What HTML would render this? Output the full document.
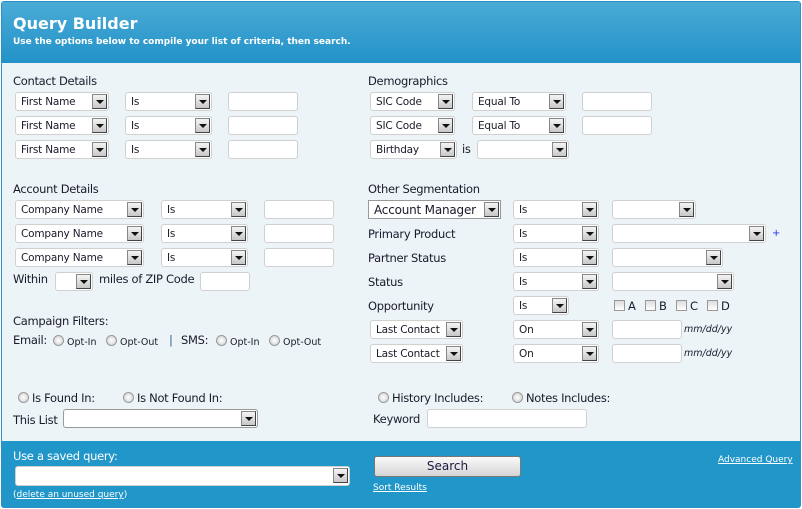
<!DOCTYPE html>
<html><head><meta charset="utf-8"><style>
*{box-sizing:border-box;margin:0;padding:0}
body{width:802px;height:509px;background:#fff;font-family:"DejaVu Sans","Liberation Sans",sans-serif;font-size:11px;color:#1a1a2a;position:relative;overflow:hidden}
#wrap{position:absolute;left:1px;top:1px;width:800px;height:507px;border:1px solid #2a8fc4;background:#edf4f8;border-radius:3px}
#hd{position:absolute;left:0;top:0;width:798px;height:61px;background:linear-gradient(#4babd6,#2292c8)}
#ft{position:absolute;left:0;top:439px;width:798px;height:66px;background:#2196c8}
.a{position:absolute;white-space:nowrap}
.s{position:absolute;height:19px;background:#fff;border:1px solid #d0d0d0;border-radius:3px;padding:3px 0 0 5px;font-size:10.5px;letter-spacing:-0.2px;white-space:nowrap}
.s i{position:absolute;right:1px;top:1px;width:15px;height:15px;background:linear-gradient(#f4f4f4,#c8c8c8);border:1px solid #888;border-right-color:#444;border-bottom-color:#444}
.s i:after{content:"";position:absolute;left:3px;top:5px;border-left:4px solid transparent;border-right:4px solid transparent;border-top:4px solid #111}
.t{position:absolute;height:19px;background:#fff;border:1px solid #d0d0d0;border-radius:3px}
.r{display:inline-block;width:11px;height:11px;border-radius:50%;border:1px solid #999;background:radial-gradient(#fff,#ccc);vertical-align:-1px;margin-right:3px}
.c{display:inline-block;width:11px;height:11px;border:1px solid #999;background:linear-gradient(#ddd,#fff);vertical-align:-1px;margin-right:3px}
.h{font-size:11.5px;letter-spacing:-0.3px;margin-top:1px}
</style></head><body>
<div id="wrap">
<div id="hd"></div><div id="ft"></div>
</div>
<div class="a" style="left:13px;top:14px;font-size:16px;font-weight:bold;color:#fff">Query Builder</div>
<div class="a" style="left:13px;top:37px;font-size:9px;font-weight:bold;color:#fff">Use the options below to compile your list of criteria, then search.</div>

<div class="a h" style="left:13px;top:73px">Contact Details</div>
<div class="s" style="left:15px;top:92px;width:94px">First Name<i></i></div>
<div class="s" style="left:125px;top:92px;width:87px">Is<i></i></div>
<div class="t" style="left:228px;top:92px;width:70px"></div>
<div class="s" style="left:15px;top:116px;width:94px">First Name<i></i></div>
<div class="s" style="left:125px;top:116px;width:87px">Is<i></i></div>
<div class="t" style="left:228px;top:116px;width:70px"></div>
<div class="s" style="left:15px;top:140px;width:94px">First Name<i></i></div>
<div class="s" style="left:125px;top:140px;width:87px">Is<i></i></div>
<div class="t" style="left:228px;top:140px;width:70px"></div>

<div class="a h" style="left:368px;top:73px">Demographics</div>
<div class="s" style="left:370px;top:92px;width:85px">SIC Code<i></i></div>
<div class="s" style="left:472px;top:92px;width:94px">Equal To<i></i></div>
<div class="t" style="left:582px;top:92px;width:70px"></div>
<div class="s" style="left:370px;top:116px;width:85px">SIC Code<i></i></div>
<div class="s" style="left:472px;top:116px;width:94px">Equal To<i></i></div>
<div class="t" style="left:582px;top:116px;width:70px"></div>
<div class="s" style="left:370px;top:140px;width:87px">Birthday<i></i></div>
<div class="a h" style="left:462px;top:141px">is</div>
<div class="s" style="left:477px;top:140px;width:92px"><i></i></div>

<div class="a h" style="left:13px;top:181px">Account Details</div>
<div class="s" style="left:15px;top:200px;width:129px">Company Name<i></i></div>
<div class="s" style="left:161px;top:200px;width:87px">Is<i></i></div>
<div class="t" style="left:264px;top:200px;width:70px"></div>
<div class="s" style="left:15px;top:224px;width:129px">Company Name<i></i></div>
<div class="s" style="left:161px;top:224px;width:87px">Is<i></i></div>
<div class="t" style="left:264px;top:224px;width:70px"></div>
<div class="s" style="left:15px;top:248px;width:129px">Company Name<i></i></div>
<div class="s" style="left:161px;top:248px;width:87px">Is<i></i></div>
<div class="t" style="left:264px;top:248px;width:70px"></div>
<div class="a h" style="left:13px;top:271px">Within</div>
<div class="s" style="left:55px;top:272px;width:38px"><i></i></div>
<div class="a h" style="left:99px;top:271px">miles of ZIP Code</div>
<div class="t" style="left:200px;top:272px;width:50px"></div>

<div class="a h" style="left:13px;top:313px">Campaign Filters:</div>
<div class="a h" style="left:13px;top:332px">Email:</div>
<div class="a" style="left:53px;top:335px;font-size:9.5px"><span class="r"></span>Opt-In</div>
<div class="a" style="left:106px;top:335px;font-size:9.5px"><span class="r"></span>Opt-Out</div>
<div class="a h" style="left:169px;top:332px;color:#2a5d9a">|</div>
<div class="a h" style="left:181px;top:332px">SMS:</div>
<div class="a" style="left:216px;top:335px;font-size:9.5px"><span class="r"></span>Opt-In</div>
<div class="a" style="left:269px;top:335px;font-size:9.5px"><span class="r"></span>Opt-Out</div>

<div class="a h" style="left:368px;top:181px">Other Segmentation</div>
<div class="s" style="left:368px;top:200px;width:133px;border-radius:0;border-color:#999;font-size:12px;padding-top:2px">Account Manager<i></i></div>
<div class="s" style="left:513px;top:200px;width:86px">Is<i></i></div>
<div class="s" style="left:612px;top:200px;width:84px"><i></i></div>
<div class="a h" style="left:368px;top:226px">Primary Product</div>
<div class="s" style="left:513px;top:224px;width:86px">Is<i></i></div>
<div class="s" style="left:612px;top:224px;width:154px"><i></i></div>
<div class="a" style="left:772px;top:228px;color:#2233dd;font-size:10px">+</div>
<div class="a h" style="left:368px;top:250px">Partner Status</div>
<div class="s" style="left:513px;top:248px;width:86px">Is<i></i></div>
<div class="s" style="left:612px;top:248px;width:111px"><i></i></div>
<div class="a h" style="left:368px;top:274px">Status</div>
<div class="s" style="left:513px;top:272px;width:86px">Is<i></i></div>
<div class="s" style="left:612px;top:272px;width:122px"><i></i></div>
<div class="a h" style="left:368px;top:298px">Opportunity</div>
<div class="s" style="left:513px;top:296px;width:56px">Is<i></i></div>
<div class="a h" style="left:614px;top:298px"><span class="c"></span>A</div>
<div class="a h" style="left:645px;top:298px"><span class="c"></span>B</div>
<div class="a h" style="left:676px;top:298px"><span class="c"></span>C</div>
<div class="a h" style="left:707px;top:298px"><span class="c"></span>D</div>
<div class="s" style="left:370px;top:320px;width:93px">Last Contact<i></i></div>
<div class="s" style="left:513px;top:320px;width:86px">On<i></i></div>
<div class="t" style="left:612px;top:320px;width:70px"></div>
<div class="a" style="left:684px;top:324px;font-size:9.5px;font-style:italic">mm/dd/yy</div>
<div class="s" style="left:370px;top:344px;width:93px">Last Contact<i></i></div>
<div class="s" style="left:513px;top:344px;width:86px">On<i></i></div>
<div class="t" style="left:612px;top:344px;width:70px"></div>
<div class="a" style="left:684px;top:348px;font-size:9.5px;font-style:italic">mm/dd/yy</div>

<div class="a h" style="left:18px;top:390px"><span class="r"></span>Is Found In:</div>
<div class="a h" style="left:123px;top:390px"><span class="r"></span>Is Not Found In:</div>
<div class="a h" style="left:13px;top:412px">This List</div>
<div class="s" style="left:63px;top:409px;width:195px;border-color:#999"><i></i></div>
<div class="a h" style="left:378px;top:390px"><span class="r"></span>History Includes:</div>
<div class="a h" style="left:512px;top:390px"><span class="r"></span>Notes Includes:</div>
<div class="a h" style="left:373px;top:411px">Keyword</div>
<div class="t" style="left:427px;top:409px;width:160px"></div>

<div class="a h" style="left:13px;top:448px;color:#fff">Use a saved query:</div>
<div class="s" style="left:15px;top:466px;width:335px;height:20px"><i></i></div>
<div class="a" style="left:13px;top:490px;font-size:9px;color:#fff">(<u>delete an unused query</u>)</div>
<div class="a" style="left:374px;top:456px;width:147px;height:21px;border:1px solid #777;border-radius:3px;background:linear-gradient(#fafafa,#d4d4d4);text-align:center;font-size:12px;line-height:19px;color:#1a1a40">Search</div>
<div class="a" style="left:373px;top:483px;font-size:9px;color:#fff"><u>Sort Results</u></div>
<div class="a" style="left:718px;top:455px;font-size:9px;color:#fff"><u>Advanced Query</u></div>
</body></html>
